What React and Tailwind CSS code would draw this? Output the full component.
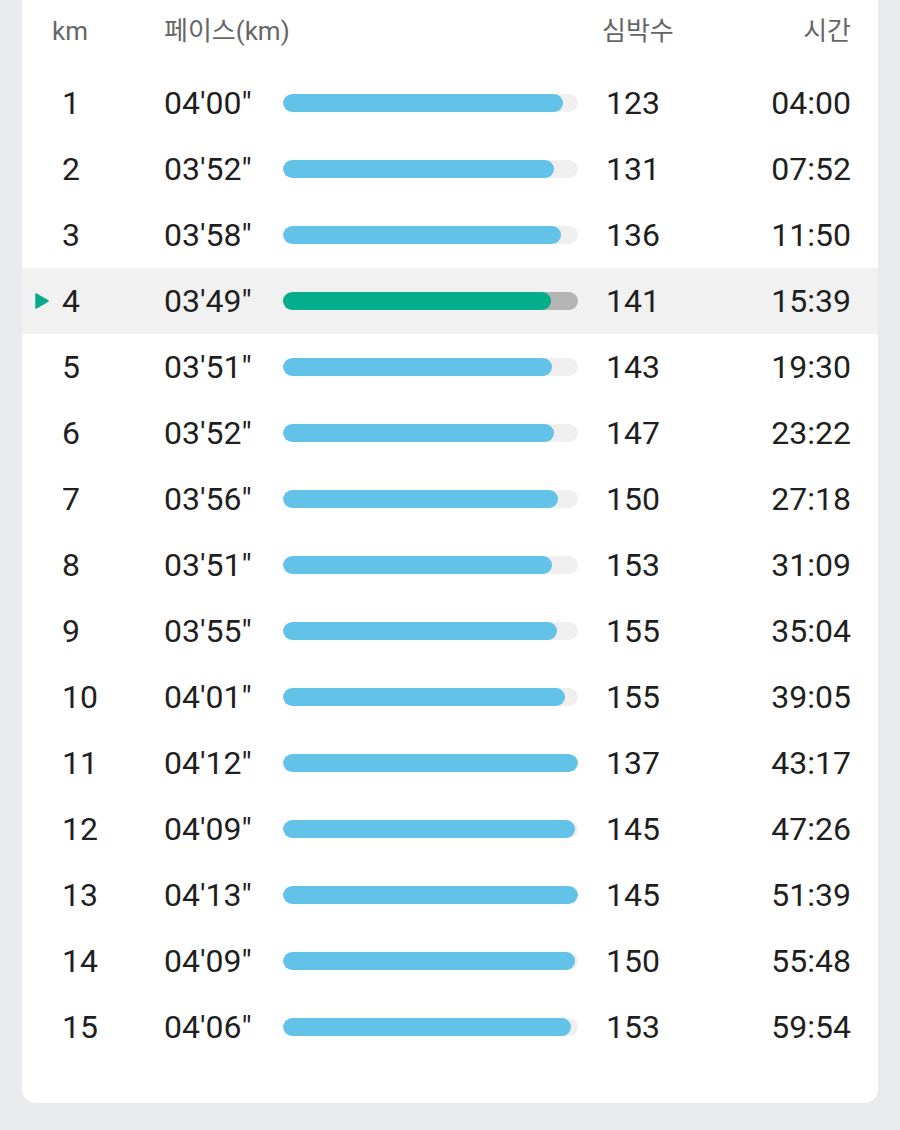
import React from "react";

const splits = [
  { km: 1, pace: "04'00\"", fill: 280, hr: 123, time: "04:00" },
  { km: 2, pace: "03'52\"", fill: 271, hr: 131, time: "07:52" },
  { km: 3, pace: "03'58\"", fill: 278, hr: 136, time: "11:50" },
  { km: 4, pace: "03'49\"", fill: 268, hr: 141, time: "15:39", current: true },
  { km: 5, pace: "03'51\"", fill: 269, hr: 143, time: "19:30" },
  { km: 6, pace: "03'52\"", fill: 271, hr: 147, time: "23:22" },
  { km: 7, pace: "03'56\"", fill: 275, hr: 150, time: "27:18" },
  { km: 8, pace: "03'51\"", fill: 269, hr: 153, time: "31:09" },
  { km: 9, pace: "03'55\"", fill: 274, hr: 155, time: "35:04" },
  { km: 10, pace: "04'01\"", fill: 282, hr: 155, time: "39:05" },
  { km: 11, pace: "04'12\"", fill: 295, hr: 137, time: "43:17" },
  { km: 12, pace: "04'09\"", fill: 292, hr: 145, time: "47:26" },
  { km: 13, pace: "04'13\"", fill: 295, hr: 145, time: "51:39" },
  { km: 14, pace: "04'09\"", fill: 292, hr: 150, time: "55:48" },
  { km: 15, pace: "04'06\"", fill: 288, hr: 153, time: "59:54" },
];

const SplitRow = ({ row }) => {
  const active = row.current;
  return (
    <div
      className={`flex items-center h-[66px] pl-10 pr-[27px] text-[32px] text-[#1f1f1f] ${
        active ? "bg-[#f1f1f1]" : ""
      }`}
    >
      <div className="relative w-[102px]">
        {active && (
          <svg
            className="absolute -left-[27px] top-1/2 -translate-y-1/2"
            width="14"
            height="17"
            viewBox="0 0 14 17"
          >
            <path d="M1 1.5 L13 8.5 L1 15.5 Z" fill="#06a98a" stroke="#06a98a" strokeWidth="1.5" strokeLinejoin="round" />
          </svg>
        )}
        {row.km}
      </div>
      <div className="w-[119px]">{row.pace}</div>
      {/* pace bar */}
      <div
        className={`h-[18px] w-[295px] rounded-full overflow-hidden ${
          active ? "bg-[#b4b4b4]" : "bg-[#efefef]"
        }`}
      >
        <div
          className={`h-full rounded-full ${active ? "bg-[#04ad8b]" : "bg-[#62c2e7]"}`}
          style={{ width: row.fill }}
        />
      </div>
      <div className="ml-[28px] flex-1">{row.hr}</div>
      <div className="text-right">{row.time}</div>
    </div>
  );
};

export default function App() {
  return (
    <div className="min-h-[1130px] bg-[#e9eaee] px-[22px] font-['Roboto','Noto_Sans_CJK_KR',sans-serif]">
      <div className="bg-white rounded-b-[14px] pb-[43px]">
        <div className="flex items-center h-[70px] pb-2 pl-[30px] pr-[27px] text-[26px] text-[#666666]">
          <div className="w-[112px]">km</div>
          <div className="w-[438px]">페이스(km)</div>
          <div className="flex-1">심박수</div>
          <div className="text-right">시간</div>
        </div>
        {splits.map((row) => (
          <SplitRow key={row.km} row={row} />
        ))}
      </div>
    </div>
  );
}
